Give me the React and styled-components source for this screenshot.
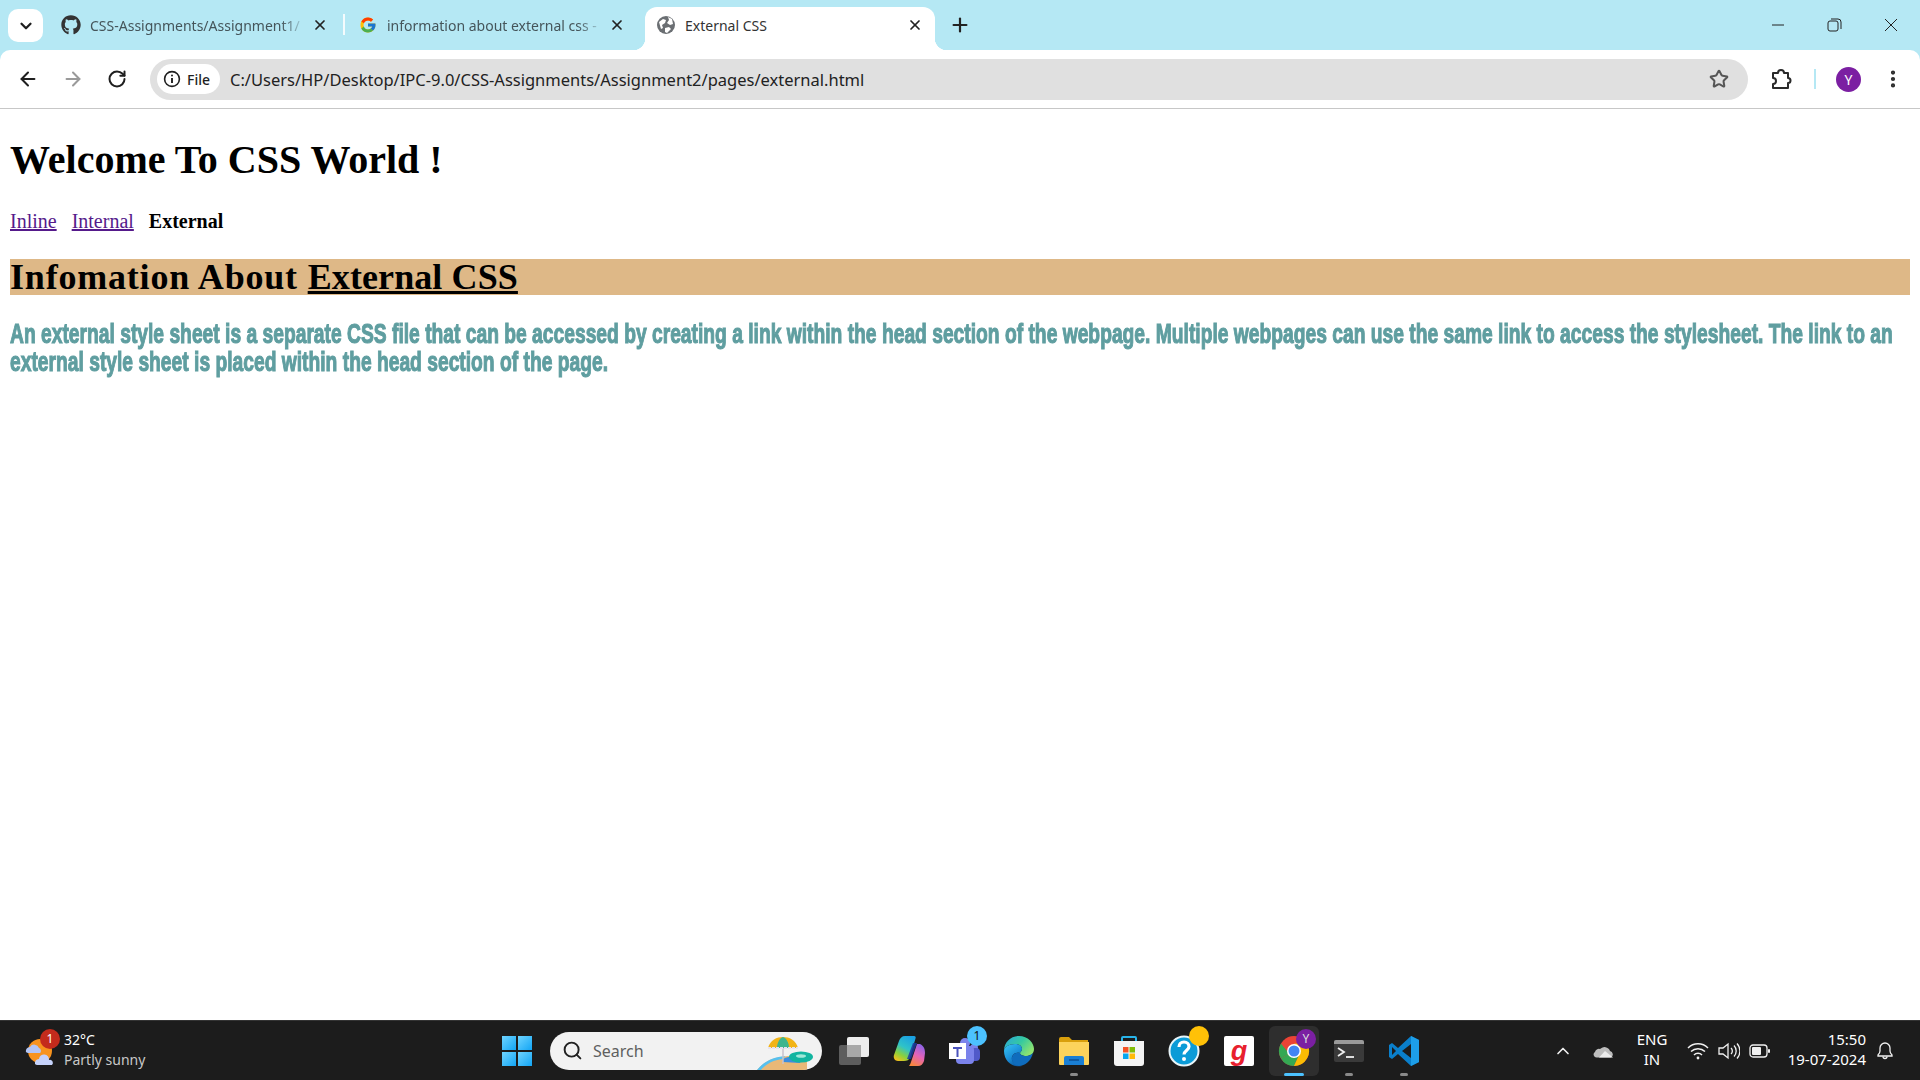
import React from "react";
import styled, { createGlobalStyle } from "styled-components";
import { FaGithub } from "react-icons/fa";
import { FcGoogle } from "react-icons/fc";
import { LuArrowLeft, LuArrowRight, LuChevronDown, LuChevronUp, LuEllipsisVertical, LuPlus, LuRotateCw, LuSearch, LuStar, LuX } from "react-icons/lu";

const GlobalStyle = createGlobalStyle`
    html, body { margin: 0; padding: 0; height: 100%; background: #fff; }
    #root { height: 100%; }
    * { box-sizing: border-box; }
`;

const uiFont = `"Noto Sans", "Open Sans", sans-serif`;

// no Impact on this machine, so a heavy sans gets squeezed horizontally
const bodySqueeze = 0.7;

const Screen = styled.div`
    display: flex;
    flex-direction: column;
    width: 1920px;
    height: 1080px;
    overflow: hidden;
    font-family: ${uiFont};
`;

const Header = styled.header`
    background: #b5e8f4;
`;

const TabStrip = styled.div`
    display: flex;
    align-items: flex-end;
    height: 50px;
    padding-left: 8px;
`;

const TabMenu = styled.button`
    display: flex;
    align-items: center;
    justify-content: center;
    width: 35px;
    height: 33px;
    margin: 0 7px 8px 0;
    padding: 0;
    border: 0;
    border-radius: 10px;
    background: #fff;
    color: #1f1f1f;
`;

const Tab = styled.div`
    position: relative;
    display: flex;
    align-items: center;
    width: 290px;
    height: ${(p) => (p.$active ? "43px" : "50px")};
    padding: ${(p) => (p.$active ? "0 11px 7px 11px" : "0 11px 0 11px")};
    margin-right: ${(p) => (p.$gap ? "8px" : "0")};
    border-radius: 12px 12px 0 0;
    background: ${(p) => (p.$active ? "#fff" : "transparent")};

    &::before,
    &::after {
        content: ${(p) => (p.$active ? '""' : "none")};
        position: absolute;
        bottom: 0;
        width: 12px;
        height: 12px;
    }
    &::before {
        left: -12px;
        background: radial-gradient(circle at 0 0, transparent 12px, #fff 12.5px);
    }
    &::after {
        right: -12px;
        background: radial-gradient(circle at 100% 0, transparent 12px, #fff 12.5px);
    }
`;

const TabIcon = styled.span`
    display: flex;
    flex: none;
    width: 20px;
    height: 20px;
    align-items: center;
    justify-content: center;
    margin-right: 9px;
    color: #333;
`;

const TabTitle = styled.span`
    flex: 1;
    overflow: hidden;
    white-space: nowrap;
    font-size: 14px;
    color: ${(p) => (p.$active ? "#333" : "#45555a")};
    mask-image: ${(p) => (p.$active ? "none" : "linear-gradient(to right, #000 88%, transparent 100%)")};
`;

const TabClose = styled.span`
    display: flex;
    flex: none;
    margin: 0 1px 0 5px;
    color: #222;
`;

const TabDivider = styled.span`
    flex: none;
    width: 2px;
    height: 21px;
    margin: 0 2.5px 15px;
    background: #f4fbfd;
`;

const NewTab = styled.span`
    display: flex;
    margin: 0 0 14px 14px;
    color: #222;
`;

const WindowControls = styled.div`
    display: flex;
    align-items: center;
    gap: 36.5px;
    height: 50px;
    margin-left: auto;
    padding-right: 19px;
    color: #222;
`;

const WinIcon = styled.svg`
    width: 20px;
    height: 20px;
    fill: none;
    stroke: #222;
    stroke-width: 1;
`;

const Toolbar = styled.div`
    display: flex;
    align-items: center;
    height: 59px;
    padding: 0 12px 0 17px;
    background: #fff;
    border-radius: 10px 10px 0 0;
    border-bottom: 1px solid #c7c7c7;
`;

const NavButton = styled.span`
    display: flex;
    width: 22px;
    margin-right: ${(p) => p.$gap || 23}px;
    color: ${(p) => (p.$disabled ? "#9a9a9a" : "#1f1f1f")};
`;

const Omnibox = styled.div`
    display: flex;
    align-items: center;
    width: 1598px;
    height: 41px;
    margin-right: 21px;
    padding: 0 19px 0 7px;
    border-radius: 21px;
    background: #e0e0e0;
`;

const SiteChip = styled.div`
    display: flex;
    align-items: center;
    gap: 6px;
    height: 30px;
    padding: 0 10px 0 6px;
    margin-right: 10px;
    border-radius: 15px;
    background: #fff;
    font-size: 14px;
    font-weight: 500;
    color: #1f1f1f;
`;

const Url = styled.span`
    flex: 1;
    font-size: 16.5px;
    color: #222;
`;

const Star = styled.span`
    display: flex;
    color: #555;
`;

const ToolIcon = styled.span`
    display: flex;
    margin-right: ${(p) => p.$gap || 0}px;
    color: #2a2a2a;
`;

const ToolDivider = styled.span`
    width: 2px;
    height: 20px;
    margin-right: 20px;
    background: #b5e8f4;
`;

const Avatar = styled.span`
    display: flex;
    align-items: center;
    justify-content: center;
    width: 25px;
    height: 25px;
    margin-right: 21px;
    border-radius: 50%;
    background: #7b1fa2;
    color: #fff;
    font-size: 14px;
`;

const Page = styled.main`
    flex: 1;
    padding: 0 10px;
    background: #fff;
    color: #000;
    font-family: "Liberation Serif", "Times New Roman", serif;
    overflow: hidden;
`;

const Title = styled.h1`
    margin: 28px 0 27px;
    font-size: 40px;
    line-height: 46px;
    font-weight: 700;
`;

const NavLinks = styled.p`
    display: flex;
    gap: 15px;
    margin: 0 0 26px;
    font-size: 20px;
    line-height: 23px;
`;

const PageLink = styled.a`
    color: #551a8b;
    text-decoration: underline;
`;

const Current = styled.b`
    font-weight: 700;
`;

const Banner = styled.h2`
    margin: 0 0 25px;
    height: 36px;
    background: #deb887;
    font-size: 36px;
    line-height: 36px;
    letter-spacing: 0.8px;
    font-weight: 700;
`;

const BannerLink = styled.span`
    letter-spacing: 0.1px;
    text-decoration: underline;
`;

const Body = styled.p`
    width: calc(100% / ${bodySqueeze});
    margin: 0;
    font-family: "Liberation Sans", Arial, sans-serif;
    font-size: 27.5px;
    line-height: 28px;
    font-weight: 700;
    color: #5f9ea0;
    -webkit-text-stroke: 1.1px #5f9ea0;
    transform: scaleX(${bodySqueeze});
    transform-origin: 0 0;
`;

const Taskbar = styled.footer`
    display: flex;
    align-items: center;
    height: 60px;
    background: #1c1c1c;
    border-top: 1px solid #333;
    color: #fff;
`;

const Weather = styled.div`
    display: flex;
    align-items: center;
    gap: 9px;
    width: 501px;
    padding-left: 25px;
`;

const WeatherIcon = styled.div`
    position: relative;
    width: 30px;
    height: 34px;
`;

const WeatherBadge = styled.span`
    position: absolute;
    top: -5px;
    right: -5px;
    display: flex;
    align-items: center;
    justify-content: center;
    width: 20px;
    height: 20px;
    border-radius: 50%;
    background: #c42b1c;
    font-size: 12px;
    color: #fff;
`;

const WeatherText = styled.div`
    display: flex;
    flex-direction: column;
    margin-top: -2px;
    font-size: 14px;
    line-height: 20px;
`;

const Muted = styled.span`
    color: #c8c8c8;
`;

const WinLogo = styled.div`
    display: grid;
    grid-template-columns: 14px 14px;
    gap: 2px;
    margin-left: 1px;
    margin-right: 18px;
`;

const WinPane = styled.span`
    width: 14px;
    height: 14px;
    background: linear-gradient(135deg, #6fd4ff, #12a5f5);
`;

const SearchBox = styled.div`
    position: relative;
    display: flex;
    align-items: center;
    gap: 10px;
    width: 272px;
    height: 38px;
    padding-left: 12px;
    margin-right: 7px;
    border-radius: 19px;
    background: #f2f2f2;
    color: #5f5f5f;
    font-size: 16px;
    overflow: hidden;
`;

const SearchArt = styled.svg`
    position: absolute;
    right: 7px;
    bottom: 0;
    width: 58px;
    height: 36px;
`;

const AppSlot = styled.div`
    position: relative;
    display: flex;
    align-items: center;
    justify-content: center;
    width: 50px;
    height: 50px;
    margin-right: 5px;
    border-radius: 6px;
    background: ${(p) => (p.$active ? "#2e2e2e" : "transparent")};

    &::after {
        content: ${(p) => (p.$running || p.$active ? '""' : "none")};
        position: absolute;
        bottom: 0;
        left: 50%;
        transform: translateX(-50%);
        width: ${(p) => (p.$active ? "20px" : "8px")};
        height: 3px;
        border-radius: 2px;
        background: ${(p) => (p.$active ? "#4cc2ff" : "#8a8a8a")};
    }
`;

const AppBadge = styled.span`
    position: absolute;
    top: ${(p) => p.$top ?? 2}px;
    right: ${(p) => p.$right ?? 0}px;
    display: flex;
    align-items: center;
    justify-content: center;
    width: 20px;
    height: 20px;
    border-radius: 50%;
    background: ${(p) => p.$bg};
    font-size: 12px;
    color: ${(p) => p.$color || "#111"};
`;

const GrabTile = styled.div`
    display: flex;
    align-items: center;
    justify-content: center;
    width: 30px;
    height: 30px;
    border-radius: 2px;
    background: #fff;
    color: #e8202e;
    font-family: "Liberation Sans", sans-serif;
    font-style: italic;
    font-weight: 700;
    font-size: 27px;
    line-height: 30px;
`;

const Tray = styled.div`
    display: flex;
    align-items: center;
    margin-left: auto;
    padding-right: 26px;
`;

const TrayIcon = styled.span`
    display: flex;
    margin-right: ${(p) => p.$gap || 0}px;
    color: #f0f0f0;
`;

const TrayLang = styled.div`
    width: 40px;
    margin: -3px 15px 0 0;
    font-size: 15px;
    line-height: 20px;
    text-align: center;
`;

const Clock = styled.div`
    width: 82px;
    margin: -3px 10px 0 0;
    font-size: 15px;
    line-height: 20px;
    text-align: right;
    white-space: nowrap;
    direction: rtl;
`;

const GlobeIcon = () => (
    <svg viewBox="0 0 18 18" width="18" height="18">
        <circle cx="9" cy="9" r="9" fill="#6b6f73" />
        <path d="M2 6l4-3 3 1-1 3-3 2 1 3-2 1zM11 1l4 2 1 5-3 1-3-2 2-3zM8 12l4-1 2 2-4 4-2-1z" fill="#fff" />
    </svg>
);

const InfoIcon = () => (
    <svg viewBox="0 0 18 18" width="18" height="18" fill="none" stroke="#1f1f1f" strokeWidth="1.6">
        <circle cx="9" cy="9" r="7.4" />
        <path d="M9 8v5" strokeWidth="1.9" />
        <circle cx="9" cy="5.4" r="1" fill="#1f1f1f" stroke="none" />
    </svg>
);

const PuzzleIcon = () => (
    <svg viewBox="0 0 24 24" width="24" height="24" fill="none" stroke="#2a2a2a" strokeWidth="2" strokeLinejoin="round">
        <path d="M4 6h5a3 3 0 0 1 6 0h4v5a2.5 2.5 0 0 1 0 5v5H4v-4a3 3 0 0 0 0-6z" />
    </svg>
);

const SunCloudIcon = () => (
    <svg viewBox="0 0 30 34" width="30" height="34">
        <circle cx="15" cy="17" r="12" fill="#f7931e" />
        <path d="M1 18a4 4 0 0 1 4-5 5 5 0 0 1 9 1 3 3 0 0 1 1 5H4a3 3 0 0 1-3-1z" fill="#b3c5f5" />
        <path d="M10 30a4 4 0 0 1 4-5 5 5 0 0 1 10 1 3 3 0 0 1 3 5H13a3 3 0 0 1-3-1z" fill="#c5d2fa" />
    </svg>
);

const BeachArt = () => (
    <SearchArt viewBox="0 0 58 36">
        <path d="M0 36c8-10 20-14 36-14l14 2v12z" fill="#e9b877" />
        <path d="M0 36c6-8 16-13 28-14l-2 3c-10 1-17 5-22 11z" fill="#57c0ee" />
        <path d="M26 25c6-3 14-3 20-1l-3 5-17-1z" fill="#3b8de0" />
        <path d="M26 6v24" stroke="#c8c2cc" strokeWidth="1.5" />
        <path d="M11 14C13 6 20 3 26 3s13 3 15 11z" fill="#f2b417" />
        <path d="M20 14c0-6 3-10 6-11 3 1 6 5 6 11z" fill="#3eb58e" />
        <path d="M11 14h30" stroke="#e7e2ef" strokeWidth="2" strokeDasharray="3 1" />
        <ellipse cx="44" cy="23" rx="12" ry="5.5" fill="#12b5a0" />
        <ellipse cx="44" cy="22" rx="5" ry="1.8" fill="#9fe8d8" />
    </SearchArt>
);

const TaskViewIcon = () => (
    <svg viewBox="0 0 32 30" width="32" height="30">
        <rect x="1" y="9" width="22" height="20" rx="2" fill="#5d5d5d" />
        <rect x="9" y="1" width="22" height="20" rx="2" fill="#ededed" />
        <rect x="9" y="9" width="14" height="12" fill="#a8a8a8" />
    </svg>
);

const CopilotIcon = () => (
    <svg viewBox="0 0 32 32" width="32" height="32">
        <defs>
            <linearGradient id="copA" x1="0.7" y1="0" x2="0.2" y2="1">
                <stop offset="0" stopColor="#1ba1e2" />
                <stop offset="0.45" stopColor="#2fc3c8" />
                <stop offset="0.75" stopColor="#8bd13c" />
                <stop offset="1" stopColor="#f2c11d" />
            </linearGradient>
            <linearGradient id="copB" x1="0.7" y1="0" x2="0.3" y2="1">
                <stop offset="0" stopColor="#8a63e8" />
                <stop offset="0.5" stopColor="#e563b8" />
                <stop offset="1" stopColor="#f8863c" />
            </linearGradient>
        </defs>
        <path d="M12 1h9c1.500 0 2 1 1.500 2.500L17 22c-1 3-3 4-6 4H5c-3 0-5-3-4-6l5-14c1-3 3-5 6-5z" fill="url(#copA)" />
        <path d="M16 31h9c3 0 5-2 6-5l1-8c0-4-1-7-5-9h-3l-6 18c-.5 2-1.500 3-2 4z" fill="url(#copB)" />
        <path d="M20 8h4l-6 16h-4z" fill="#1b3a9e" opacity="0.85" />
    </svg>
);

const TeamsIcon = () => (
    <svg viewBox="0 0 32 30" width="32" height="30">
        <circle cx="26" cy="12" r="4" fill="#7b83eb" />
        <rect x="19" y="12" width="13" height="13" rx="4" fill="#5059c9" />
        <circle cx="17" cy="7" r="5" fill="#7b83eb" />
        <rect x="8" y="10" width="18" height="18" rx="4" fill="#7b83eb" />
        <rect x="1" y="7" width="17" height="16" fill="#fff" />
        <path d="M5 11h9v2h-3.500v8H8.500v-8H5z" fill="#4b53bc" />
    </svg>
);

const EdgeIcon = () => (
    <svg viewBox="0 0 32 32" width="32" height="32">
        <defs>
            <linearGradient id="edgeA" x1="0" y1="0" x2="0.6" y2="1">
                <stop offset="0" stopColor="#38c6f4" />
                <stop offset="0.6" stopColor="#1b8fd8" />
                <stop offset="1" stopColor="#0c59a4" />
            </linearGradient>
            <linearGradient id="edgeB" x1="0" y1="0" x2="1" y2="0.6">
                <stop offset="0" stopColor="#2aa5e0" />
                <stop offset="0.55" stopColor="#35c9a0" />
                <stop offset="1" stopColor="#8ee36f" />
            </linearGradient>
        </defs>
        <path d="M1 16C1 7 8 1 16 1c9 0 15 7 15 13 0 5-4 7-8 7-3 0-6-1-6-3 0-1 2-2 2-4 0-3-3-5-7-5-6 0-11 3-11 7z" fill="url(#edgeB)" />
        <path d="M1 16c0-4 5-7 11-7 4 0 7 2 7 5 0 2-2 3-2 4-3-1-7 0-8 4-1 5 4 9 10 9C9 33 1 26 1 16z" fill="url(#edgeA)" />
        <path d="M9 22c1-4 5-5 8-4 0 2 3 3 6 3 3 0 5-1 7-3-2 8-8 13-14 13-5 0-8-5-7-9z" fill="#0f6cbd" />
    </svg>
);

const FolderIcon = () => (
    <svg viewBox="0 0 32 30" width="32" height="30">
        <path d="M1 3a2 2 0 0 1 2-2h8l3 3h16v6H1z" fill="#d99f0c" />
        <path d="M1 6h30v22a1 1 0 0 1-1 1H2a1 1 0 0 1-1-1z" fill="#fcd35c" />
        <path d="M6 29v-7a2 2 0 0 1 2-2h16a2 2 0 0 1 2 2v7z" fill="#1a7fd4" />
        <path d="M11 24h10" stroke="#0c4f94" strokeWidth="1.5" />
    </svg>
);

const StoreIcon = () => (
    <svg viewBox="0 0 30 32" width="30" height="32">
        <path d="M8 7V3a1 1 0 0 1 1-1h12a1 1 0 0 1 1 1v4" fill="none" stroke="#28b4ea" strokeWidth="2" />
        <path d="M0 6h30v22a3 3 0 0 1-3 3H3a3 3 0 0 1-3-3z" fill="#f4f4f4" />
        <rect x="9" y="12" width="5.500" height="5.500" fill="#f35325" />
        <rect x="15.500" y="12" width="5.500" height="5.500" fill="#81bc06" />
        <rect x="9" y="18.500" width="5.500" height="5.500" fill="#05a6f0" />
        <rect x="15.500" y="18.500" width="5.500" height="5.500" fill="#ffba08" />
    </svg>
);

const HelpIcon = () => (
    <svg viewBox="0 0 32 32" width="32" height="32">
        <circle cx="16" cy="16" r="14.500" fill="#0b9bd7" stroke="#e8f4f8" strokeWidth="2" />
        <path d="M11 12c0-3 2-5 5-5s5 2 5 4.500c0 4-5 4-5 8" fill="none" stroke="#fff" strokeWidth="3.200" />
        <circle cx="16" cy="24" r="2" fill="#fff" />
    </svg>
);

const ChromeIcon = () => (
    <svg viewBox="0 0 32 32" width="32" height="32">
        <circle cx="16" cy="16" r="15" fill="#ea4335" />
        <path d="M16 16L3 23.500A15 15 0 0 1 3 8.500L9 16z" fill="#34a853" />
        <path d="M3 23.500A15 15 0 0 0 16 31l7-15-7 0z" fill="#34a853" />
        <path d="M16 31a15 15 0 0 0 13-22.500H16l7 7.500z" fill="#fbbc04" />
        <circle cx="16" cy="16" r="7" fill="#fff" />
        <circle cx="16" cy="16" r="5.500" fill="#4285f4" />
    </svg>
);

const TerminalIcon = () => (
    <svg viewBox="0 0 32 24" width="32" height="24">
        <rect x="1" y="1" width="30" height="22" rx="2" fill="#3a3a3a" />
        <path d="M1 3a2 2 0 0 1 2-2h26a2 2 0 0 1 2 2v2H1z" fill="#9a9a9a" />
        <path d="M5 9l6 4-6 4" fill="none" stroke="#f0f0f0" strokeWidth="1.800" />
        <path d="M13 18h8" stroke="#f0f0f0" strokeWidth="1.800" />
    </svg>
);

const VsCodeIcon = () => (
    <svg viewBox="0 0 32 32" width="32" height="32">
        <path d="M23 1l8 4v22l-8 4-13-12-6 5-3-2V10l3-2 6 5z" fill="#0a7fcb" />
        <path d="M23 1l8 4v22l-8 4z" fill="#1d9ee8" />
        <path d="M23 9v14l-9-7z" fill="#1c1c1c" />
        <path d="M4 12v8l4-4z" fill="#1c1c1c" />
    </svg>
);

const CloudIcon = () => (
    <svg viewBox="0 0 22 14" width="22" height="14">
        <path d="M2 8a4 4 0 0 1 5-3 6 6 0 0 1 10 2 3.500 3.500 0 0 1 1 6.500H4a3 3 0 0 1-2-5.500z" fill="#bdbdbd" />
        <path d="M6 13.500L12 7l8 6.500z" fill="#ececec" />
    </svg>
);

const WifiIcon = () => (
    <svg viewBox="0 0 22 18" width="22" height="18" fill="none" stroke="#f0f0f0" strokeWidth="1.500">
        <path d="M1 6a14 14 0 0 1 20 0M4 9.500a10 10 0 0 1 14 0M7 13a5.500 5.500 0 0 1 8 0" />
        <circle cx="11" cy="16" r="1.400" fill="#f0f0f0" stroke="none" />
    </svg>
);

const VolumeIcon = () => (
    <svg viewBox="0 0 22 18" width="22" height="18" fill="none" stroke="#f0f0f0" strokeWidth="1.300">
        <path d="M1 6h4l5-4v14l-5-4H1z" />
        <path d="M13 6a4 4 0 0 1 0 6M16 3.500a8 8 0 0 1 0 11M19 1.500a11 11 0 0 1 0 15" />
    </svg>
);

const BatteryIcon = () => (
    <svg viewBox="0 0 22 14" width="22" height="14">
        <rect x="1" y="1" width="17" height="12" rx="3" fill="none" stroke="#f0f0f0" strokeWidth="1.300" />
        <rect x="3" y="3" width="9" height="8" rx="1" fill="#f0f0f0" />
        <rect x="19" y="5" width="2" height="4" rx="1" fill="#f0f0f0" />
    </svg>
);

const BellIcon = () => (
    <svg viewBox="0 0 18 20" width="18" height="20" fill="none" stroke="#f0f0f0" strokeWidth="1.300">
        <path d="M2 14c1-1 2-2 2-4V7a5 5 0 0 1 10 0v3c0 2 1 3 2 4v1H2z" />
        <path d="M7 15.500a2 2 0 0 0 4 0" />
    </svg>
);

const taskbarApps = [
    { id: "taskview", icon: <TaskViewIcon /> },
    { id: "copilot", icon: <CopilotIcon /> },
    { id: "teams", icon: <TeamsIcon />, badge: { bg: "#4cc2ff", text: "1", top: 0, right: 2 } },
    { id: "edge", icon: <EdgeIcon /> },
    { id: "files", icon: <FolderIcon />, running: true },
    { id: "store", icon: <StoreIcon /> },
    { id: "help", icon: <HelpIcon />, badge: { bg: "#ffc107", text: "", top: 0, right: 0 } },
    { id: "grab", icon: <GrabTile>g</GrabTile> },
    { id: "chrome", icon: <ChromeIcon />, active: true, badge: { bg: "#7b1fa2", text: "Y", color: "#ddd", top: 3, right: 3 } },
    { id: "terminal", icon: <TerminalIcon />, running: true },
    { id: "vscode", icon: <VsCodeIcon />, running: true },
];

const App = () => {
    return (
        <Screen>
            <GlobalStyle />
            <Header>
                <TabStrip>
                    <TabMenu>
                        <LuChevronDown size={18} strokeWidth={3} />
                    </TabMenu>
                    <Tab>
                        <TabIcon><FaGithub size={20} /></TabIcon>
                        <TabTitle>CSS-Assignments/Assignment1/</TabTitle>
                        <TabClose><LuX size={16} strokeWidth={2.6} /></TabClose>
                    </Tab>
                    <TabDivider />
                    <Tab $gap>
                        <TabIcon><FcGoogle size={18} /></TabIcon>
                        <TabTitle>information about external css -</TabTitle>
                        <TabClose><LuX size={16} strokeWidth={2.6} /></TabClose>
                    </Tab>
                    <Tab $active>
                        <TabIcon><GlobeIcon /></TabIcon>
                        <TabTitle $active>External CSS</TabTitle>
                        <TabClose><LuX size={16} strokeWidth={2.6} /></TabClose>
                    </Tab>
                    <NewTab><LuPlus size={22} strokeWidth={2.4} /></NewTab>
                    <WindowControls>
                        <WinIcon viewBox="0 0 20 20"><path d="M4 10h12" /></WinIcon>
                        <WinIcon viewBox="0 0 20 20">
                            <rect x="3" y="6" width="10" height="10" rx="2" />
                            <path d="M6 4h7a3 3 0 0 1 3 3v7" />
                        </WinIcon>
                        <WinIcon viewBox="0 0 20 20"><path d="M4 4l12 12M16 4L4 16" /></WinIcon>
                    </WindowControls>
                </TabStrip>
                <Toolbar>
                    <NavButton><LuArrowLeft size={22} strokeWidth={2.2} /></NavButton>
                    <NavButton $disabled><LuArrowRight size={22} strokeWidth={2.2} /></NavButton>
                    <NavButton $gap={21}><LuRotateCw size={20} strokeWidth={2.4} /></NavButton>
                    <Omnibox>
                        <SiteChip>
                            <InfoIcon />
                            File
                        </SiteChip>
                        <Url>C:/Users/HP/Desktop/IPC-9.0/CSS-Assignments/Assignment2/pages/external.html</Url>
                        <Star><LuStar size={20} strokeWidth={2.4} /></Star>
                    </Omnibox>
                    <ToolIcon $gap={21}><PuzzleIcon /></ToolIcon>
                    <ToolDivider />
                    <Avatar>Y</Avatar>
                    <ToolIcon><LuEllipsisVertical size={22} strokeWidth={2.6} /></ToolIcon>
                </Toolbar>
            </Header>

            <Page>
                <Title>Welcome To CSS World !</Title>
                <NavLinks>
                    <PageLink href="#">Inline</PageLink>
                    <PageLink href="#">Internal</PageLink>
                    <Current>External</Current>
                </NavLinks>
                <Banner>
                    Infomation About <BannerLink>External CSS</BannerLink>
                </Banner>
                <Body>
                    An external style sheet is a separate CSS file that can be accessed by creating a link within the head section of the webpage. Multiple webpages can use the same link to access the stylesheet. The link to an external style sheet is placed within the head section of the page.
                </Body>
            </Page>

            <Taskbar>
                <Weather>
                    <WeatherIcon>
                        <SunCloudIcon />
                        <WeatherBadge>1</WeatherBadge>
                    </WeatherIcon>
                    <WeatherText>
                        <span>32°C</span>
                        <Muted>Partly sunny</Muted>
                    </WeatherText>
                </Weather>
                <WinLogo>
                    <WinPane />
                    <WinPane />
                    <WinPane />
                    <WinPane />
                </WinLogo>
                <SearchBox>
                    <LuSearch size={21} color="#222" strokeWidth={2.2} />
                    Search
                    <BeachArt />
                </SearchBox>
                {taskbarApps.map((app) => (
                    <AppSlot key={app.id} $running={app.running} $active={app.active}>
                        {app.icon}
                        {app.badge && (
                            <AppBadge $bg={app.badge.bg} $color={app.badge.color} $top={app.badge.top} $right={app.badge.right}>
                                {app.badge.text}
                            </AppBadge>
                        )}
                    </AppSlot>
                ))}
                <Tray>
                    <TrayIcon $gap={20}><LuChevronUp size={20} strokeWidth={2} /></TrayIcon>
                    <TrayIcon $gap={17}><CloudIcon /></TrayIcon>
                    <TrayLang>ENG<br />IN</TrayLang>
                    <TrayIcon $gap={9}><WifiIcon /></TrayIcon>
                    <TrayIcon $gap={9}><VolumeIcon /></TrayIcon>
                    <TrayIcon $gap={13}><BatteryIcon /></TrayIcon>
                    <Clock>15:50<br />19-07-2024</Clock>
                    <TrayIcon><BellIcon /></TrayIcon>
                </Tray>
            </Taskbar>
        </Screen>
    );
};

export default App;
